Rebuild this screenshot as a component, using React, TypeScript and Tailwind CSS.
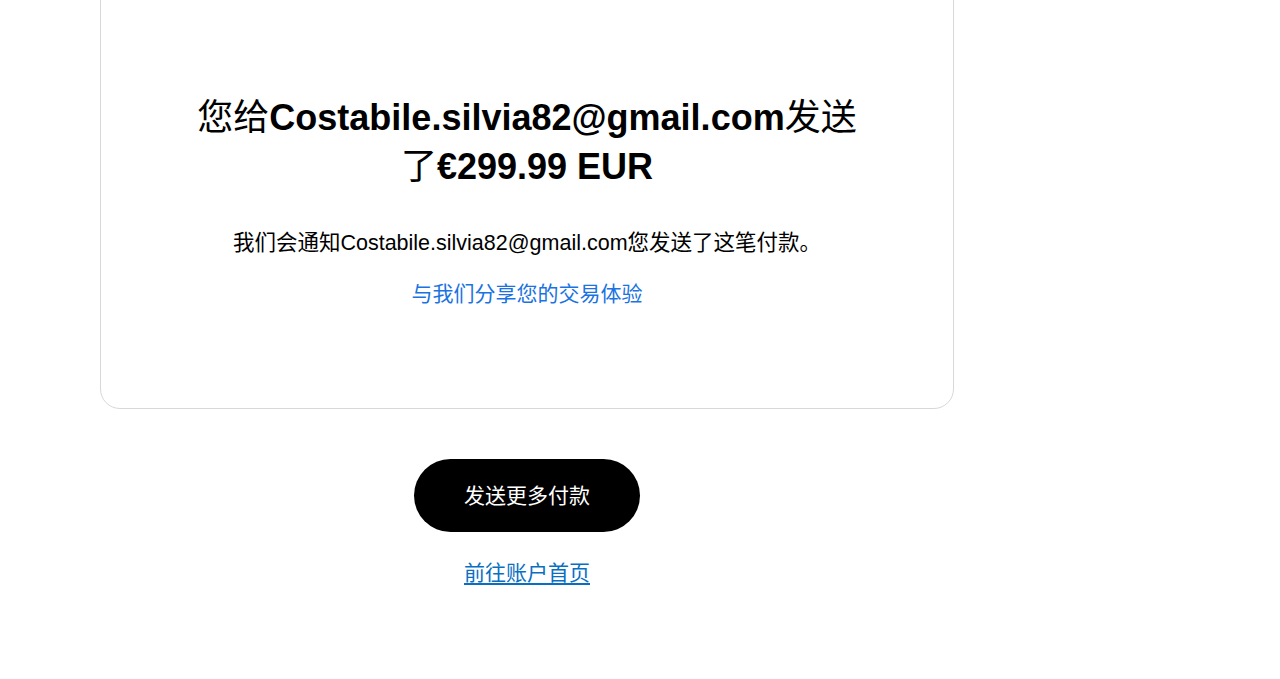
export default function App() {
  const cjk = '"Liberation Sans", "Noto Sans CJK SC", sans-serif';
  return (
    <div className="w-[1280px] h-[679px] overflow-hidden bg-white" style={{ fontFamily: cjk }}>
      <div className="ml-[100px] w-[854px] flex flex-col items-center">
        <div className="-mt-[39px] w-full rounded-[20px] border border-[#d8d8d8] pt-[131px] pb-[99px] flex flex-col items-center text-center">
          <h1 className="text-[36px] leading-[49px] text-black font-normal">
            您给<span className="font-bold">Costabile.silvia82@gmail.com</span>发送
            <br />
            了<span className="font-bold">€299.99 EUR</span>
          </h1>
          <p className="mt-[37px] text-[21.5px] leading-[30px] text-black">
            我们会通知Costabile.silvia82@gmail.com您发送了这笔付款。
          </p>
          <a className="mt-[21px] text-[21px] leading-[30px] text-[#1a73e0] cursor-pointer">与我们分享您的交易体验</a>
        </div>
        <button className="mt-[50px] w-[226px] h-[73px] rounded-full bg-black text-white text-[21px]">发送更多付款</button>
        <a className="mt-[26px] text-[21px] leading-[30px] text-[#0a6fc2] underline underline-offset-[3px] cursor-pointer">前往账户首页</a>
      </div>
    </div>
  );
}
